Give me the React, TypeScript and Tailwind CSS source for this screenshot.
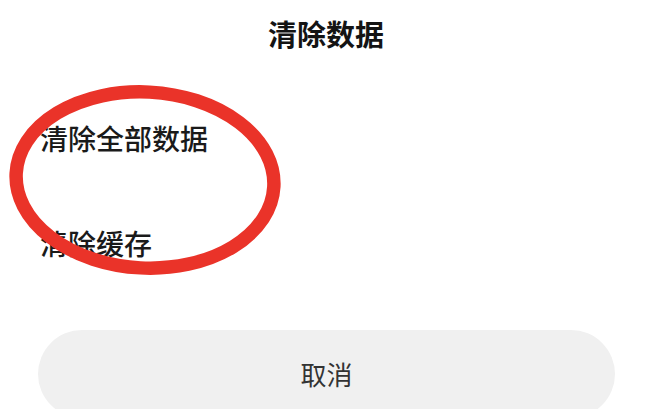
import React from 'react';

const font = { fontFamily: '"Noto Sans CJK SC", "Noto Sans", sans-serif' };

export default function App() {
  const options = ['清除全部数据', '清除缓存'];

  return (
    <div className="relative w-[650px] h-[409px] overflow-hidden bg-white" style={font}>
      {/* Title */}
      <div className="h-[67px] flex items-center justify-center">
        <h1 className="text-[29px] font-semibold text-[#141414] leading-none pl-[2px]">清除数据</h1>
      </div>

      {/* Options */}
      <div className="mt-[18px] flex flex-col">
        {options.map((o) => (
          <div key={o} className="h-[105px] flex items-center px-[40px]">
            <span className="text-[28px] font-medium text-[#1a1a1a] leading-none">{o}</span>
          </div>
        ))}
      </div>

      {/* Cancel button */}
      <div className="mt-[35px] px-[38px]">
        <button className="w-[577px] h-[88px] rounded-full bg-[#f0f0f0] flex items-center justify-center">
          <span className="text-[26px] text-[#333333] leading-none">取消</span>
        </button>
      </div>

      {/* Red annotation ellipse */}
      <svg className="absolute left-0 top-0 pointer-events-none" width="650" height="409" viewBox="0 0 650 409">
        <ellipse
          cx="145"
          cy="180"
          rx="129"
          ry="88"
          fill="none"
          stroke="#ea3329"
          strokeWidth="13.5"
          transform="rotate(3 145 180)"
        />
      </svg>
    </div>
  );
}
